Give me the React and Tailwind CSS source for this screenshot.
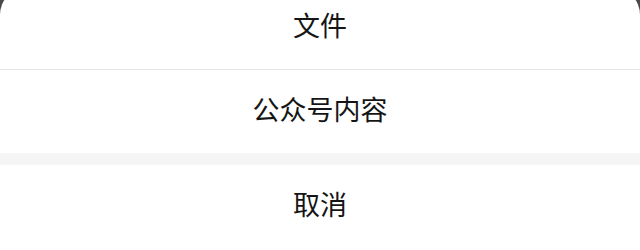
export default function App() {
  return (
    <div className="h-[250px] w-[640px] overflow-hidden bg-[#4a4a4a] font-['Noto_Sans_CJK_SC',sans-serif] text-[#151515]">
      {/* Action sheet */}
      <div className="-mt-[13px] flex flex-col rounded-t-[28px] bg-white">
        <div className="flex h-[83px] items-center justify-center border-b border-[#e6e6e6] pb-[5px] text-[27px]">
          文件
        </div>
        <div className="flex h-[83px] items-center justify-center pb-[5px] text-[27px]">
          公众号内容
        </div>
        <div className="h-[12px] bg-[#f5f5f5]"></div>
        <div className="flex h-[86px] items-center justify-center pb-[8px] text-[27px]">
          取消
        </div>
      </div>
    </div>
  );
}
